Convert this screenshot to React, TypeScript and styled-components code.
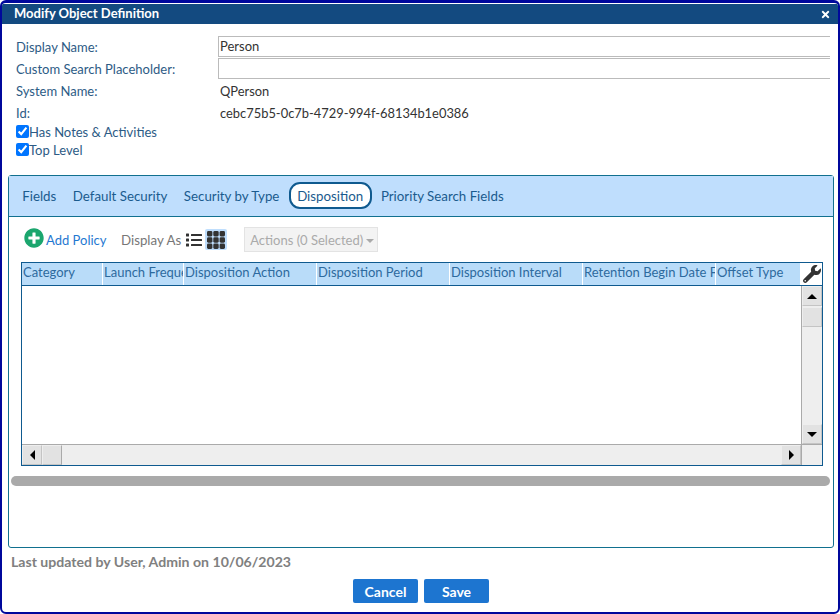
import React from 'react';
import styled, { createGlobalStyle } from 'styled-components';
import { FaList, FaPlusCircle, FaTimes, FaWrench } from 'react-icons/fa';

const GlobalStyle = createGlobalStyle`
  html, body {
    margin: 0;
    padding: 0;
    width: 840px;
    height: 614px;
    overflow: hidden;
    background: #fff;
    font-family: Lato, "Open Sans", sans-serif;
  }
  * {
    box-sizing: border-box;
  }
`;

const Dialog = styled.div`
  width: 840px;
  height: 614px;
  display: flex;
  flex-direction: column;
  border: 2px solid #00089c;
  border-top-width: 3px;
  border-radius: 6px;
  background: #fff;
  overflow: hidden;
`;

const TitleBar = styled.header`
  height: 20px;
  flex: none;
  margin-top: 1px;
  padding: 0 7px 2px 12px;
  display: flex;
  align-items: center;
  justify-content: space-between;
  background: #134a80;
  color: #fff;
  font-size: 13px;
  font-weight: 700;
`;

const CloseIcon = styled(FaTimes)`
  width: 11px;
  height: 11px;
  margin-top: 3px;
`;

const Body = styled.div`
  flex: 1;
  display: flex;
  flex-direction: column;
  padding: 11px 4px 0 6px;
`;

const Form = styled.div`
  display: grid;
  grid-template-columns: 202px 1fr;
  grid-auto-rows: 22px;
  padding: 0 0 0 8px;
`;

const Label = styled.label`
  align-self: center;
  padding-top: 2px;
  font-size: 13px;
  color: #2d5b85;
`;

const TextInput = styled.input`
  align-self: end;
  width: 612px;
  height: 21px;
  padding: 0 1px 2px;
  border: 1px solid #bbb;
  border-width: 1px 0 1px 1px;
  border-radius: 0;
  outline: none;
  font-family: inherit;
  font-size: 13px;
  color: #333;
  background: #fff;
`;

const Value = styled.span`
  align-self: center;
  padding: 1px 0 0 2px;
  font-size: 12.9px;
  color: #333;
`;

const CheckRows = styled.div`
  display: flex;
  flex-direction: column;
  padding-left: 8px;
`;

const CheckRow = styled.label`
  height: 18px;
  display: flex;
  align-items: center;
  font-size: 13px;
  color: #2d5b85;

  input {
    width: 13px;
    height: 13px;
    margin: 0;
    position: relative;
    top: -1px;
  }
`;

const TabPanel = styled.section`
  margin-top: 16px;
  height: 373px;
  flex: none;
  width: 826px;
  display: flex;
  flex-direction: column;
  border: 1px solid #11708f;
  border-radius: 3px;
`;

const TabBar = styled.nav`
  height: 41px;
  flex: none;
  display: flex;
  align-items: center;
  padding: 0 0 1px 5px;
  background: #bfdefd;
  border-bottom: 1px solid #11708f;
`;

const Tab = styled.span<{ $active?: boolean }>`
  height: 27px;
  display: flex;
  align-items: center;
  padding: 0 ${(p) => (p.$active ? '6.5px' : '6.25px')};
  margin: 0 ${(p) => (p.$active ? '1px' : '0')};
  font-size: 13.3px;
  color: #1a5b8e;
  border-radius: 11px;
  background: ${(p) => (p.$active ? '#fff' : 'transparent')};
  border: 2px solid ${(p) => (p.$active ? '#0f5a8f' : 'transparent')};
`;

const Toolbar = styled.div`
  height: 45px;
  flex: none;
  display: flex;
  align-items: center;
  padding: 0 0 0 15px;
`;

const AddButton = styled.span`
  display: flex;
  align-items: center;
  font-size: 13px;
  color: #1f78d1;
`;

const AddIcon = styled(FaPlusCircle)`
  width: 20px;
  height: 20px;
  margin: -4px 2px 0 0;
  color: #1ba66e;
`;

const DisplayAs = styled.span`
  margin: 1px 0 0 14.5px;
  font-size: 13.3px;
  color: #777;
`;

const ViewButton = styled.span<{ $active?: boolean }>`
  width: 22px;
  height: 21px;
  display: flex;
  align-items: center;
  justify-content: center;
  margin-left: ${(p) => (p.$active ? '0' : '2px')};
  border-radius: 2px;
  background: ${(p) => (p.$active ? '#bfdefd' : 'transparent')};
  color: #333;
`;

const ListIcon = styled(FaList)`
  width: 18px;
  height: 16px;
`;

const ActionsButton = styled.span`
  margin-left: 17px;
  width: 134px;
  height: 25px;
  flex: none;
  padding: 0 5px;
  display: flex;
  align-items: center;
  gap: 3px;
  white-space: nowrap;
  font-size: 13px;
  color: #aaa;
  background: #f3f3f3;
  border: 1px solid #e3e3e3;
`;

const Caret = styled.i`
  width: 0;
  height: 0;
  margin-top: 3px;
  border-left: 4px solid transparent;
  border-right: 4px solid transparent;
  border-top: 4px solid #aaa;
`;

const Grid = styled.div`
  margin-left: 12px;
  width: 802px;
  height: 204px;
  flex: none;
  display: flex;
  flex-direction: column;
  border: 1px solid #0f5a8f;
`;

const HeaderRow = styled.div`
  height: 22px;
  flex: none;
  display: flex;
`;

const HeaderCell = styled.div<{ $width: number }>`
  width: ${(p) => p.$width}px;
  flex: none;
  overflow: hidden;
  white-space: nowrap;
  padding: 1px 0 0 1px;
  line-height: 17px;
  font-size: 13px;
  color: #2d6a9e;
  background: #b9dcf9;
  border-right: 1px solid #fff;

  &:nth-child(7) {
    border-right: none;
  }
`;

const ToolCell = styled.div`
  flex: 1;
  display: flex;
  align-items: center;
  justify-content: center;
  padding-left: 1px;
  color: #333;
`;

const WrenchIcon = styled(FaWrench)`
  width: 18px;
  height: 18px;
`;

const GridMiddle = styled.div`
  flex: 1;
  display: flex;
  min-height: 0;
  border-top: 1px solid #0f5a8f;
`;

const GridRows = styled.div`
  flex: 1;
  background: #fff;
`;

const VerticalTrack = styled.div`
  width: 21px;
  flex: none;
  display: flex;
  flex-direction: column;
  background: #eee;
  border-left: 1px solid #aaa;
`;

const HorizontalTrack = styled.div`
  height: 21px;
  flex: none;
  display: flex;
  background: #eee;
  border-top: 1px solid #aaa;
`;

const ScrollButton = styled.div`
  width: 20px;
  height: 20px;
  flex: none;
  display: flex;
  align-items: center;
  justify-content: center;
  background: #e2e2e2;
  border: 1px solid #eee;
  border-right-color: #c4c4c4;
  border-bottom-color: #c4c4c4;
`;

const VerticalThumb = styled(ScrollButton)`
  height: 20px;
  margin-top: 1px;
`;

const HorizontalThumb = styled(ScrollButton)`
  border-right: 1px solid #aaa;
`;

const TrackFill = styled.div`
  flex: 1;
`;

const TrackCorner = styled.div`
  width: 21px;
  flex: none;
  border-left: 1px solid #aaa;
`;

const Arrow = styled.i<{ $dir: 'up' | 'down' | 'left' | 'right' }>`
  width: 0;
  height: 0;
  border-style: solid;
  border-color: transparent;
  border-width: ${(p) =>
    p.$dir === 'up'
      ? '0 5px 5px 5px'
      : p.$dir === 'down'
        ? '5px 5px 0 5px'
        : p.$dir === 'left'
          ? '5px 5px 5px 0'
          : '5px 0 5px 5px'};
  ${(p) => `border-${{ up: 'bottom', down: 'top', left: 'right', right: 'left' }[p.$dir]}-color: #000;`}
`;

const PanelScroll = styled.div`
  margin: 10px 0 0 2px;
  width: 819px;
  height: 10px;
  flex: none;
  border-radius: 5px;
  background: #aaa;
`;

const LastUpdated = styled.p`
  margin: 5px 0 0 3px;
  font-size: 14.1px;
  line-height: 17px;
  font-weight: 700;
  color: #808080;
`;

const Footer = styled.footer`
  margin-top: 9px;
  display: flex;
  justify-content: center;
  gap: 6px;
  padding-left: 0;
`;

const Button = styled.button`
  width: 65px;
  height: 24px;
  padding: 0;
  border: none;
  border-radius: 2px;
  background: #1d75d0;
  color: #fff;
  font-family: inherit;
  font-size: 14px;
  font-weight: 700;
`;

const tabs = ['Fields', 'Default Security', 'Security by Type', 'Disposition', 'Priority Search Fields'];

const columns = [
  { title: 'Category', width: 81 },
  { title: 'Launch Frequency', width: 81 },
  { title: 'Disposition Action', width: 133 },
  { title: 'Disposition Period', width: 133 },
  { title: 'Disposition Interval', width: 133 },
  { title: 'Retention Begin Date Field', width: 133 },
  { title: 'Offset Type', width: 84 },
];

function GridIcon() {
  const spots = [0, 1, 2];
  return (
    <svg width="18" height="18" viewBox="0 0 18 18" fill="#333">
      {spots.map((row) =>
        spots.map((col) => <rect key={`${row}-${col}`} x={col * 6.3} y={row * 6.3} width="5.4" height="5.4" rx="1.4" />),
      )}
    </svg>
  );
}

export default function App() {
  return (
    <>
      <GlobalStyle />
      <Dialog>
        <TitleBar>
          <span>Modify Object Definition</span>
          <CloseIcon />
        </TitleBar>
        <Body>
          <Form>
            <Label>Display Name:</Label>
            <TextInput defaultValue="Person" />
            <Label>Custom Search Placeholder:</Label>
            <TextInput />
            <Label>System Name:</Label>
            <Value>QPerson</Value>
            <Label>Id:</Label>
            <Value>cebc75b5-0c7b-4729-994f-68134b1e0386</Value>
          </Form>
          <CheckRows>
            <CheckRow>
              <input type="checkbox" defaultChecked />
              Has Notes &amp; Activities
            </CheckRow>
            <CheckRow>
              <input type="checkbox" defaultChecked />
              Top Level
            </CheckRow>
          </CheckRows>
          <TabPanel>
            <TabBar>
              {tabs.map((tab) => (
                <Tab key={tab} $active={tab === 'Disposition'}>
                  {tab}
                </Tab>
              ))}
            </TabBar>
            <Toolbar>
              <AddButton>
                <AddIcon />
                Add Policy
              </AddButton>
              <DisplayAs>Display As</DisplayAs>
              <ViewButton>
                <ListIcon />
              </ViewButton>
              <ViewButton $active>
                <GridIcon />
              </ViewButton>
              <ActionsButton>
                Actions (0 Selected)
                <Caret />
              </ActionsButton>
            </Toolbar>
            <Grid>
              <HeaderRow>
                {columns.map((column) => (
                  <HeaderCell key={column.title} $width={column.width}>
                    {column.title}
                  </HeaderCell>
                ))}
                <ToolCell>
                  <WrenchIcon />
                </ToolCell>
              </HeaderRow>
              <GridMiddle>
                <GridRows />
                <VerticalTrack>
                  <ScrollButton>
                    <Arrow $dir="up" />
                  </ScrollButton>
                  <VerticalThumb />
                  <TrackFill />
                  <ScrollButton>
                    <Arrow $dir="down" />
                  </ScrollButton>
                </VerticalTrack>
              </GridMiddle>
              <HorizontalTrack>
                <ScrollButton>
                  <Arrow $dir="left" />
                </ScrollButton>
                <HorizontalThumb />
                <TrackFill />
                <ScrollButton>
                  <Arrow $dir="right" />
                </ScrollButton>
                <TrackCorner />
              </HorizontalTrack>
            </Grid>
            <PanelScroll />
          </TabPanel>
          <LastUpdated>Last updated by User, Admin on 10/06/2023</LastUpdated>
          <Footer>
            <Button>Cancel</Button>
            <Button>Save</Button>
          </Footer>
        </Body>
      </Dialog>
    </>
  );
}
